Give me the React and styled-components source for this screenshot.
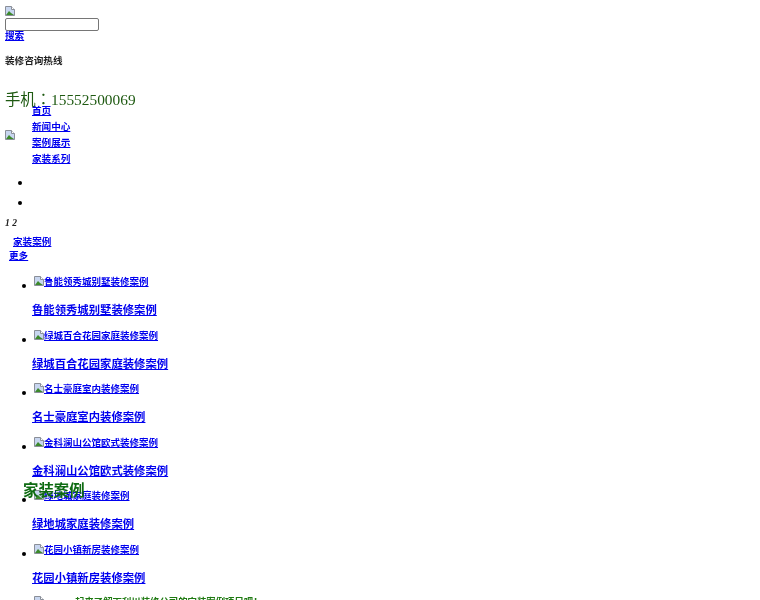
import React from "react";
import styled, { createGlobalStyle } from "styled-components";

const GlobalStyle = createGlobalStyle`
  body {
    margin: 0;
    padding: 0;
    background: #fff;
    font-family: "Liberation Serif", "Noto Sans CJK SC", serif;
    font-size: 9.6px;
    line-height: 16px;
    color: #000;
  }
  a { color: #00e; }
`;

const Page = styled.div`
  position: relative;
  box-sizing: border-box;
  height: 600px;
  overflow: hidden;
  padding: 5px 0 0 5px;
  filter: blur(0.45px);
`;
const LogoRow = styled.div`
  height: 13px;
`;
const SearchInput = styled.input`
  display: block;
  box-sizing: border-box;
  width: 94px;
  height: 13px;
  margin: 0;
  padding: 0;
  border: 1px solid #767676;
  border-radius: 2px;
  background: #fff;
`;
const SearchLink = styled.a`
  display: block;
  font-weight: bold;
  margin-top: -3px;
  width: max-content;
`;
const HotlineTitle = styled.h4`
  margin: 9px 0 0;
  font-size: 9.6px;
  color: #222;
`;
const Phone = styled.div`
  margin-top: 20px;
  font-family: "Liberation Serif", "Noto Sans CJK TC", serif;
  font-size: 15.36px;
  line-height: 22px;
  color: #1f5a12;
`;
const NavRow = styled.div`
  display: flex;
  align-items: center;
  margin-top: -8px;
`;
const NavList = styled.ul`
  list-style: none;
  margin: 0 0 0 17px;
  padding: 0;
  font-weight: bold;
`;
const NavItem = styled.li`
  height: 16px;
`;
const Dots = styled.ul`
  list-style: none;
  margin: 6px 0 0;
  padding: 0 0 0 13px;
`;
const Dot = styled.li`
  height: 20px;
  display: flex;
  align-items: center;
`;
const Bullet = styled.span`
  flex: none;
  width: 4px;
  height: 4px;
  border-radius: 50%;
  background: #000;
`;
const Pager = styled.div`
  margin-top: 2px;
  font-weight: bold;
  font-style: italic;
  color: #222;
`;
const SectionLink = styled.a`
  display: block;
  margin: 3px 0 0 8px;
  font-weight: bold;
  width: max-content;
`;
const MoreLink = styled.a`
  display: block;
  margin: -2px 0 0 4px;
  font-weight: bold;
  width: max-content;
`;
const CaseList = styled.ul`
  list-style: none;
  margin: 10px 0 0;
  padding: 0 0 0 17px;
`;
const CaseItem = styled.li`
  display: flex;
  height: 53.6px;
  ${Bullet} {
    margin: 10px 6px 0 0;
  }
`;
const CaseThumb = styled.a`
  display: block;
  height: 16px;
  padding-left: 2px;
  font-size: 9.5px;
  font-weight: bold;
  white-space: nowrap;
  width: max-content;
  svg {
    vertical-align: -1px;
  }
`;
const CaseTitle = styled.h3`
  margin: 12px 0 0;
  font-size: 11.35px;
  line-height: 16px;
  a {
    color: #00e;
  }
`;
const Teaser = styled.div`
  padding-left: 29px;
  margin-top: -2px;
  white-space: nowrap;
  color: #1f7a12;
  font-weight: bold;
  font-size: 9.4px;
  svg {
    margin-right: 31px;
    vertical-align: -1px;
  }
`;
const FloatTitle = styled.div`
  position: absolute;
  left: 23px;
  top: 480px;
  font-size: 15.4px;
  line-height: 22px;
  font-weight: bold;
  color: #0e6b12;
`;

const BrokenImage = () => (
  <svg width="10" height="10" viewBox="0 0 10 10">
    <path d="M.5.5h6l3 3v6h-9z" fill="#c8d6f0" stroke="#8a8f98" />
    <path d="M1 9l3-4 2 2 3 2z" fill="#3c8a2a" />
    <path d="M6.5.5v3h3" fill="#fff" stroke="#8a8f98" />
  </svg>
);

const cases = [
  "鲁能领秀城别墅装修案例",
  "绿城百合花园家庭装修案例",
  "名士豪庭室内装修案例",
  "金科澜山公馆欧式装修案例",
  "绿地城家庭装修案例",
  "花园小镇新房装修案例",
];

const App = () => (
  <>
    <GlobalStyle />
    <Page>
      <LogoRow>
        <BrokenImage />
      </LogoRow>
      <SearchInput type="text" />
      <SearchLink href="#">搜索</SearchLink>
      <HotlineTitle>装修咨询热线</HotlineTitle>
      <Phone>手机：15552500069</Phone>
      <NavRow>
        <BrokenImage />
        <NavList>
          {["首页", "新闻中心", "案例展示", "家装系列"].map((t) => (
            <NavItem key={t}>
              <a href="#">{t}</a>
            </NavItem>
          ))}
        </NavList>
      </NavRow>
      <Dots>
        <Dot>
          <Bullet />
        </Dot>
        <Dot>
          <Bullet />
        </Dot>
      </Dots>
      <Pager>1 2</Pager>
      <SectionLink href="#">家装案例</SectionLink>
      <MoreLink href="#">更多</MoreLink>
      <CaseList>
        {cases.map((t) => (
          <CaseItem key={t}>
            <Bullet />
            <div>
              <CaseThumb href="#">
                <BrokenImage />
                {t}
              </CaseThumb>
              <CaseTitle>
                <a href="#">{t}</a>
              </CaseTitle>
            </div>
          </CaseItem>
        ))}
      </CaseList>
      <Teaser>
        <BrokenImage />
        起来了解下利川装修公司的家装案例项目吧！
      </Teaser>
      <FloatTitle>家装案例</FloatTitle>
    </Page>
  </>
);

export default App;
